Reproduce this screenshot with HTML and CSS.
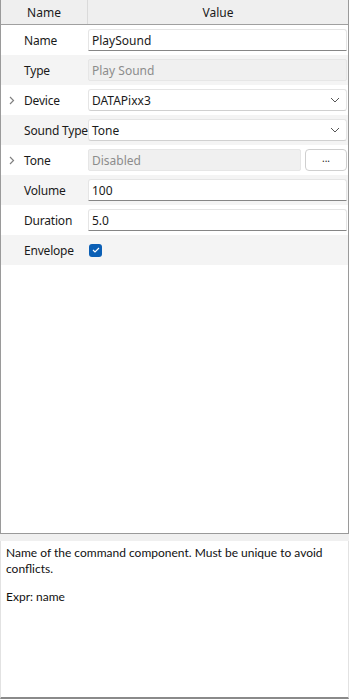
FILE: index.html
```html
<!DOCTYPE html>
<html lang="en">
<head>
    <meta charset="UTF-8">
    <meta name="viewport" content="width=device-width, initial-scale=1.0">
    <title>PlaySound properties</title>
    <link rel="stylesheet" href="styles.css">
</head>
<body>
    <div class="props">
        <div class="head">
            <div class="head-cell">Name</div>
            <div class="head-cell">Value</div>
        </div>

        <div class="row">
            <div class="label">Name</div>
            <div class="value"><div class="field">PlaySound</div></div>
        </div>
        <div class="row alt">
            <div class="label">Type</div>
            <div class="value"><div class="field disabled">Play Sound</div></div>
        </div>
        <div class="row">
            <div class="label">
                <svg class="expand" width="6" height="9" viewBox="0 0 6 9"><polyline points="1,1 4.5,4.5 1,8" fill="none" stroke="#808080" stroke-width="1.2"/></svg>
                Device
            </div>
            <div class="value">
                <div class="field select">DATAPixx3
                    <svg class="chev" width="10" height="6" viewBox="0 0 10 6"><polyline points="1,1 5,5 9,1" fill="none" stroke="#555" stroke-width="1"/></svg>
                </div>
            </div>
        </div>
        <div class="row alt">
            <div class="label">Sound Type</div>
            <div class="value">
                <div class="field select">Tone
                    <svg class="chev" width="10" height="6" viewBox="0 0 10 6"><polyline points="1,1 5,5 9,1" fill="none" stroke="#555" stroke-width="1"/></svg>
                </div>
            </div>
        </div>
        <div class="row">
            <div class="label">
                <svg class="expand" width="6" height="9" viewBox="0 0 6 9"><polyline points="1,1 4.5,4.5 1,8" fill="none" stroke="#808080" stroke-width="1.2"/></svg>
                Tone
            </div>
            <div class="value split">
                <div class="field disabled">Disabled</div>
                <div class="dots">...</div>
            </div>
        </div>
        <div class="row alt">
            <div class="label">Volume</div>
            <div class="value"><div class="field">100</div></div>
        </div>
        <div class="row">
            <div class="label">Duration</div>
            <div class="value"><div class="field">5.0</div></div>
        </div>
        <div class="row alt">
            <div class="label">Envelope</div>
            <div class="value">
                <span class="check">
                    <svg width="8" height="6" viewBox="0 0 8 6"><polyline points="1,3 3,5 7,1" fill="none" stroke="#fff" stroke-width="1.1"/></svg>
                </span>
            </div>
        </div>
    </div>

    <div class="help">
        <p>Name of the command component. Must be unique to avoid conflicts.</p>
        <p>Expr: name</p>
    </div>
</body>
</html>
```

FILE: styles.css
```css
body {
    margin: 0;
    background-color: #f0f0f0;
    font-family: "Noto Sans", "Open Sans", sans-serif;
    font-size: 12px;
    color: #1a1a1a;
}

.props {
    box-sizing: border-box;
    width: 349px;
    height: 534px;
    background-color: #ffffff;
    border: 1px solid #9a9a9a;
    border-top: none;
}

.head {
    display: grid;
    grid-template-columns: 86px 1fr;
    height: 24px;
    background-color: #efefef;
    border-bottom: 1px solid #a0a0a0;
}

.head-cell {
    display: flex;
    align-items: center;
    justify-content: center;
}

.head-cell + .head-cell {
    border-left: 1px solid #dadada;
}

.row {
    display: grid;
    grid-template-columns: 87px 1fr;
    height: 30px;
}

.row.alt {
    background-color: #f4f4f4;
}

.label {
    position: relative;
    display: flex;
    align-items: center;
    padding-left: 23px;
    white-space: nowrap;
    letter-spacing: -0.2px;
}

.expand {
    position: absolute;
    left: 8px;
    top: 11px;
}

.value {
    display: flex;
    align-items: center;
    padding-right: 1px;
}

.value.split {
    gap: 4px;
}

.field {
    box-sizing: border-box;
    flex: 1;
    height: 22px;
    display: flex;
    align-items: center;
    padding-left: 3px;
    background-color: #ffffff;
    border: 1px solid #e5e5e5;
    border-bottom-color: #868686;
    border-radius: 3px 3px 0 0;
}

.field.disabled {
    background-color: #f0f0f0;
    color: #8c8c8c;
    border-color: #e6e6e6;
    border-radius: 2px;
}

.field.select {
    border-bottom-color: #d0d0d0;
    border-radius: 3px;
    justify-content: space-between;
    padding-right: 6px;
}

.dots {
    box-sizing: border-box;
    width: 42px;
    height: 22px;
    display: flex;
    justify-content: center;
    align-items: center;
    padding-bottom: 4px;
    background-color: #ffffff;
    border: 1px solid #cfcfcf;
    border-radius: 4px;
    font-size: 10px;
}

.check {
    box-sizing: border-box;
    width: 13px;
    height: 13px;
    margin-left: 1px;
    display: flex;
    justify-content: center;
    align-items: center;
    background-color: #0b5fb5;
    border-radius: 3px;
}

.help {
    box-sizing: border-box;
    height: 158px;
    margin-top: 7px;
    padding: 4px 5px;
    background-color: #ffffff;
    border-left: 1px solid #e2e2e2;
    border-right: 1px solid #e2e2e2;
    border-bottom: 2px solid #8a8a8a;
    font-family: "Lato", sans-serif;
    font-size: 12px;
    line-height: 16px;
    color: #111111;
}

.help p {
    margin: 0 0 12px 0;
}
```
